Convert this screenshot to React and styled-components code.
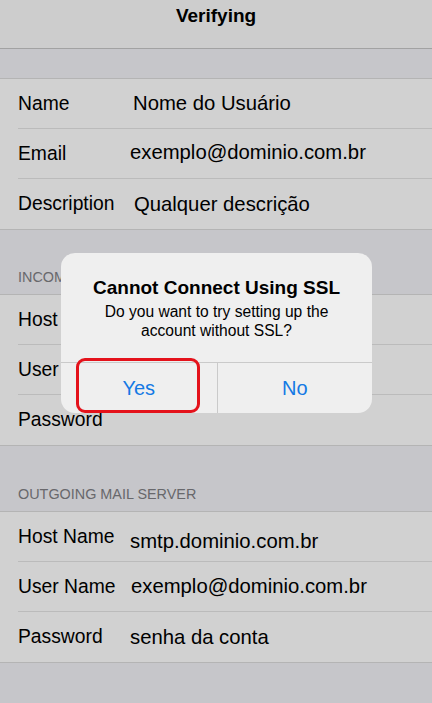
import React from "react";
import styled, { createGlobalStyle } from "styled-components";

const GlobalStyle = createGlobalStyle`
  html, body {
    margin: 0;
    padding: 0;
    background: #f2f2f7;
    font-family: "Liberation Sans", Arial, sans-serif;
    -webkit-font-smoothing: antialiased;
  }
  * { box-sizing: border-box; }
`;

const Screen = styled.div`
  width: 432px;
  height: 703px;
  overflow: hidden;
  position: relative;
  background: #f2f2f7;
  display: flex;
  flex-direction: column;
`;

const NavBar = styled.div`
  height: 49px;
  background: #fbfbfb;
  border-bottom: 1px solid #c6c6c6;
  display: flex;
  justify-content: center;
  padding-top: 5px;
`;

const NavTitle = styled.div`
  font-size: 19px;
  font-weight: 700;
  color: #000;
  line-height: 22px;
`;

const SectionHeader = styled.div`
  height: ${(p) => p.$height}px;
  display: flex;
  align-items: flex-end;
  padding: 0 0 8px 18px;
  font-size: 14.4px;
  line-height: 17px;
  color: #7f7f84;
  text-transform: uppercase;
`;

const Group = styled.div`
  background: #fff;
  border-top: 1px solid #dcdcdc;
  border-bottom: 1px solid #dcdcdc;
`;

const Row = styled.div`
  padding-left: 18px;
`;

const RowInner = styled.div`
  height: 50px;
  display: flex;
  align-items: center;
  color: #000;
  border-bottom: ${(p) => (p.$last ? "none" : "1px solid #e4e4e4")};
`;

const Label = styled.span`
  width: 112px;
  flex-shrink: 0;
  font-size: 19.3px;
`;

const Value = styled.span`
  font-size: 20.3px;
  transform: translate(${(p) => p.$dx || 0}px, ${(p) => p.$dy || 0}px);
  white-space: nowrap;
`;

const Dim = styled.div`
  position: absolute;
  inset: 0;
  background: rgba(0, 0, 0, 0.18);
`;

const Alert = styled.div`
  position: absolute;
  left: 61px;
  top: 253px;
  width: 311px;
  background: #efefef;
  border-radius: 14px;
  display: flex;
  flex-direction: column;
`;

const AlertBody = styled.div`
  padding: 24px 12px 22px;
  text-align: center;
`;

const AlertTitle = styled.div`
  font-size: 19px;
  font-weight: 700;
  line-height: 22px;
  color: #000;
`;

const AlertMessage = styled.div`
  margin-top: 3px;
  font-size: 15.6px;
  line-height: 19px;
  color: #000;
`;

const Buttons = styled.div`
  display: grid;
  grid-template-columns: 1fr 1fr;
  border-top: 1px solid #cacaca;
`;

const Button = styled.div`
  position: relative;
  height: 50px;
  display: flex;
  align-items: center;
  justify-content: center;
  font-size: 20px;
  color: #1479e4;
  & + & {
    border-left: 1px solid #cacaca;
  }
`;

const Highlight = styled.div`
  position: absolute;
  left: 15px;
  right: 17px;
  top: -5px;
  bottom: 0;
  border: 3px solid #e4121b;
  border-radius: 9px;
`;

const groups = [
  {
    header: null,
    rows: [
      { label: "Name", value: "Nome do Usuário", dx: 3 },
      { label: "Email", value: "exemplo@dominio.com.br", dx: 0, dy: -1 },
      { label: "Description", value: "Qualquer descrição", dx: 4 },
    ],
  },
  {
    header: "Incoming Mail Server",
    height: 64,
    rows: [
      { label: "Host Name", value: "imap.dominio.com.br" },
      { label: "User Name", value: "exemplo@dominio.com.br" },
      { label: "Password", value: "" },
    ],
  },
  {
    header: "Outgoing Mail Server",
    height: 65,
    rows: [
      { label: "Host Name", value: "smtp.dominio.com.br", dy: 5 },
      { label: "User Name", value: "exemplo@dominio.com.br", dx: 1 },
      { label: "Password", value: "senha da conta" },
    ],
  },
];

export default function App() {
  return (
    <>
      <GlobalStyle />
      <Screen>
        <NavBar>
          <NavTitle>Verifying</NavTitle>
        </NavBar>
        {groups.map((g, gi) => (
          <React.Fragment key={gi}>
            {g.header ? (
              <SectionHeader $height={g.height}>{g.header}</SectionHeader>
            ) : (
              <SectionHeader $height={29} />
            )}
            <Group>
              {g.rows.map((r, ri) => (
                <Row key={ri}>
                  <RowInner $last={ri === g.rows.length - 1}>
                    <Label>{r.label}</Label>
                    <Value $dx={r.dx} $dy={r.dy}>{r.value}</Value>
                  </RowInner>
                </Row>
              ))}
            </Group>
          </React.Fragment>
        ))}
        <Dim />
        <Alert>
          <AlertBody>
            <AlertTitle>Cannot Connect Using SSL</AlertTitle>
            <AlertMessage>
              Do you want to try setting up the
              <br />
              account without SSL?
            </AlertMessage>
          </AlertBody>
          <Buttons>
            <Button>
              Yes
              <Highlight />
            </Button>
            <Button>No</Button>
          </Buttons>
        </Alert>
      </Screen>
    </>
  );
}
